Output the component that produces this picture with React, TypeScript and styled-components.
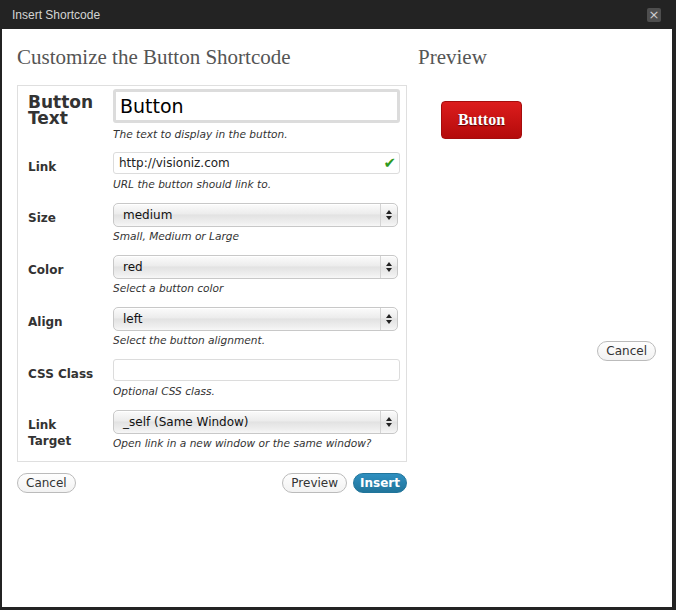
import styled, { createGlobalStyle } from "styled-components"

const Global = createGlobalStyle`
html, body {
  margin: 0;
  padding: 0;
  background: #232323;
}
* {
  box-sizing: border-box;
}
`

const Frame = styled.div`
width: 676px;
height: 610px;
background: #232323;
display: flex;
flex-direction: column;
padding: 0 4px 3px 2px;
`

const TitleBar = styled.div`
height: 29px;
display: flex;
align-items: center;
justify-content: space-between;
padding: 0 11px 0 10px;
font-family: "Liberation Sans", Arial, sans-serif;
font-size: 12px;
color: #d4d4d4;
`

const Close = styled.div`
width: 14px;
height: 14px;
margin-top: 1px;
border-radius: 2px;
background: #4e4e4e;
color: #cfcfcf;
font-size: 13px;
line-height: 13px;
text-align: center;
font-family: "DejaVu Sans", sans-serif;
`

const Body = styled.div`
flex: 1;
background: #fff;
display: flex;
gap: 11px;
padding: 16px 16px 0 15px;
`

const Column = styled.div<{ $w: number }>`
width: ${p => p.$w}px;
display: flex;
flex-direction: column;
`

const Heading = styled.h2`
margin: 0;
font-family: "Liberation Serif", Georgia, serif;
font-weight: normal;
font-size: 21px;
line-height: 24px;
color: #555;
`

const FormBox = styled.div`
margin-top: 16px;
border: 1px solid #dfdfdf;
padding: 3px 6px 0 10px;
`

const Row = styled.div<{ $gap?: number }>`
display: grid;
grid-template-columns: 72px 1fr;
column-gap: 13px;
padding-bottom: ${p => p.$gap ?? 12}px;
`

const Label = styled.div<{ $big?: boolean }>`
font-family: "DejaVu Sans", sans-serif;
font-weight: bold;
font-size: ${p => (p.$big ? "17px" : "12px")};
line-height: 16px;
color: #333;
padding-top: ${p => (p.$big ? "5px" : "7px")};
`

const BigInput = styled.div`
height: 34px;
border: 3px solid #dcdcdc;
border-radius: 3px;
padding: 0 0 0 4px;
font-family: "DejaVu Sans", sans-serif;
font-size: 19px;
line-height: 28px;
color: #000;
`

const TextInput = styled.div`
position: relative;
height: 22px;
border: 1px solid #dcdcdc;
border-radius: 3px;
padding: 0 0 0 5px;
font-family: "DejaVu Sans", sans-serif;
font-size: 12px;
line-height: 20px;
color: #222;
`

const Check = styled.span`
position: absolute;
right: 3px;
top: 0;
color: #2f9a1e;
font-size: 15px;
line-height: 20px;
`

const Select = styled.div`
width: 285px;
height: 24px;
display: flex;
align-items: center;
border: 1px solid #c8c8c8;
border-radius: 5px;
background: linear-gradient(#fbfbfb, #ececec 45%, #e2e2e2 50%, #efefef 85%, #f7f7f7);
box-shadow: inset 0 1px 0 #fff;
font-family: "DejaVu Sans", sans-serif;
font-size: 12px;
color: #111;
`

const SelectText = styled.span`
flex: 1;
padding-left: 9px;
`

const Arrow = styled.span`
width: 17px;
height: 100%;
border-left: 1px solid #d4d4d4;
display: flex;
align-items: center;
justify-content: center;
`

const Desc = styled.div<{ $mt?: number }>`
margin-top: ${p => p.$mt ?? 3}px;
font-family: "DejaVu Sans", sans-serif;
font-style: italic;
font-size: 10.6px;
line-height: 14px;
color: #333;
`

const Actions = styled.div`
margin-top: 11px;
display: flex;
align-items: center;
gap: 6px;
`

const Spacer = styled.div`
flex: 1;
`

const Pill = styled.button<{ $primary?: boolean }>`
height: 20px;
padding: 0 ${p => (p.$primary ? "6px" : "8px")};
border-radius: 11px;
border: 1px solid ${p => (p.$primary ? "#21759b" : "#bbb")};
background: ${p =>
  p.$primary ? "linear-gradient(#2e8fc0, #21759b)" : "linear-gradient(#fefefe, #f2f2f2)"};
color: ${p => (p.$primary ? "#fff" : "#333")};
font-family: "DejaVu Sans", sans-serif;
font-size: 12px;
font-weight: ${p => (p.$primary ? "bold" : "normal")};
line-height: 18px;
cursor: pointer;
`

const PreviewArea = styled.div`
padding: 32px 0 0 23px;
`

const RedButton = styled.div`
width: 81px;
height: 38px;
border-radius: 4px;
border: 1px solid #a50d0d;
background: linear-gradient(#dc1d1d, #b40b0b);
color: #fff;
font-family: "Liberation Serif", "Times New Roman", serif;
font-weight: bold;
font-size: 16px;
line-height: 36px;
text-align: center;
text-shadow: 0 1px 1px #5a0000;
`

const RightCancel = styled.div`
margin-top: 202px;
display: flex;
justify-content: flex-end;
`

function Arrows() {
  return (
    <Arrow>
      <svg width="6" height="10" viewBox="0 0 6 10">
        <path d="M3 0 L6 4 L0 4 Z" fill="#222" />
        <path d="M0 6 L6 6 L3 10 Z" fill="#222" />
      </svg>
    </Arrow>
  )
}

function Dropdown({ value }: { value: string }) {
  return (
    <Select>
      <SelectText>{value}</SelectText>
      <Arrows />
    </Select>
  )
}

export default function App() {
  return (
    <Frame>
      <Global />
      <TitleBar>
        <span>Insert Shortcode</span>
        <Close>×</Close>
      </TitleBar>
      <Body>
        <Column $w={390}>
          <Heading>Customize the Button Shortcode</Heading>
          <FormBox>
            <Row $gap={11}>
              <Label $big>Button Text</Label>
              <div>
                <BigInput>Button</BigInput>
                <Desc $mt={4}>The text to display in the button.</Desc>
              </div>
            </Row>
            <Row>
              <Label>Link</Label>
              <div>
                <TextInput>
                  http://visioniz.com
                  <Check>✔</Check>
                </TextInput>
                <Desc>URL the button should link to.</Desc>
              </div>
            </Row>
            <Row>
              <Label>Size</Label>
              <div>
                <Dropdown value="medium" />
                <Desc $mt={2}>Small, Medium or Large</Desc>
              </div>
            </Row>
            <Row>
              <Label>Color</Label>
              <div>
                <Dropdown value="red" />
                <Desc $mt={2}>Select a button color</Desc>
              </div>
            </Row>
            <Row>
              <Label>Align</Label>
              <div>
                <Dropdown value="left" />
                <Desc $mt={2}>Select the button alignment.</Desc>
              </div>
            </Row>
            <Row>
              <Label>CSS Class</Label>
              <div>
                <TextInput />
                <Desc>Optional CSS class.</Desc>
              </div>
            </Row>
            <Row $gap={11}>
              <Label>Link Target</Label>
              <div>
                <Dropdown value="_self (Same Window)" />
                <Desc $mt={2}>Open link in a new window or the same window?</Desc>
              </div>
            </Row>
          </FormBox>
          <Actions>
            <Pill>Cancel</Pill>
            <Spacer />
            <Pill>Preview</Pill>
            <Pill $primary>Insert</Pill>
          </Actions>
        </Column>
        <Column $w={238}>
          <Heading>Preview</Heading>
          <PreviewArea>
            <RedButton>Button</RedButton>
          </PreviewArea>
          <RightCancel>
            <Pill>Cancel</Pill>
          </RightCancel>
        </Column>
      </Body>
    </Frame>
  )
}
